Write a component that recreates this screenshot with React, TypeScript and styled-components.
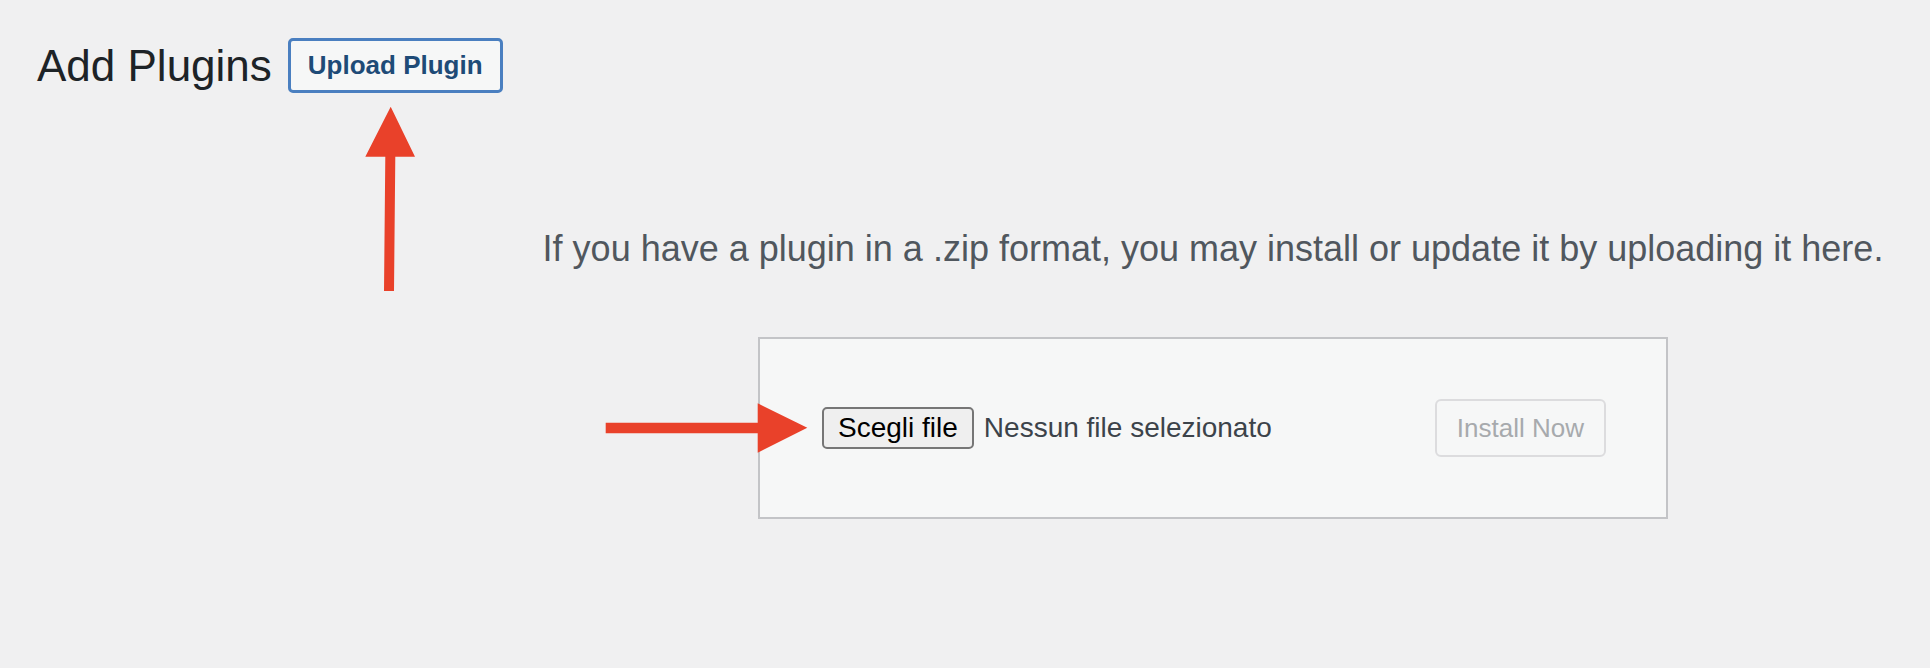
import React from "react";
import styled, { createGlobalStyle } from "styled-components";

const GlobalStyle = createGlobalStyle`
  html, body {
    margin: 0;
    padding: 0;
    background: #f0f0f1;
  }
  body {
    font-family: "Liberation Sans", Arial, sans-serif;
    color: #3c434a;
  }
  * { box-sizing: border-box; }
`;

const Page = styled.div`
  position: relative;
  width: 1930px;
  height: 668px;
  overflow: hidden;
  background: #f0f0f1;
`;

const Header = styled.div`
  display: flex;
  align-items: center;
  padding: 38px 0 0 37px;
  height: 93px;
`;

const Title = styled.h1`
  margin: 0;
  font-size: 44px;
  font-weight: 400;
  line-height: 55px;
  color: #1d2327;
`;

const TitleAction = styled.a`
  display: inline-flex;
  align-items: center;
  height: 55px;
  margin-left: 16px;
  padding: 0 17px;
  border: 3px solid #4a7fc0;
  border-radius: 5px;
  background: #f6f7f7;
  color: #1e4b77;
  font-size: 26px;
  font-weight: 700;
  text-decoration: none;
  cursor: pointer;
`;

const UploadSection = styled.section`
  display: flex;
  flex-direction: column;
  align-items: center;
  margin-left: 496px;
  padding-top: 136px;
`;

const Help = styled.p`
  margin: 0;
  font-size: 36px;
  line-height: 40px;
  color: #50575e;
  white-space: nowrap;
`;

const UploadForm = styled.form`
  display: flex;
  align-items: center;
  justify-content: space-between;
  width: 910px;
  height: 182px;
  margin-top: 68px;
  padding: 60px 60px 60px 62px;
  background: #f6f7f7;
  border: 2px solid #c3c4c7;
`;

const FileField = styled.div`
  display: flex;
  align-items: center;
  gap: 10px;
`;

const FileButton = styled.span`
  display: inline-flex;
  align-items: center;
  height: 42px;
  padding: 0 14px;
  border: 2px solid #767676;
  border-radius: 5px;
  background: #efefef;
  color: #000;
  font-size: 28px;
`;

const FileStatus = styled.span`
  font-size: 28px;
  color: #3c434a;
`;

const InstallButton = styled.button`
  height: 58px;
  padding: 0 20px;
  border: 2px solid #dcdcde;
  border-radius: 6px;
  background: #f6f7f7;
  color: #a7aaad;
  font-family: "Liberation Sans", Arial, sans-serif;
  font-size: 26px;
  cursor: default;
`;

const ArrowLayer = styled.svg<{ $left: number; $top: number }>`
  position: absolute;
  left: ${(p) => p.$left}px;
  top: ${(p) => p.$top}px;
  overflow: visible;
`;

const RED = "#e9412a";

export default function App() {
  return (
    <>
      <GlobalStyle />
      <Page>
        <Header>
          <Title>Add Plugins</Title>
          <TitleAction>Upload Plugin</TitleAction>
        </Header>
        <UploadSection>
          <Help>
            If you have a plugin in a .zip format, you may install or update it by uploading it here.
          </Help>
          <UploadForm onSubmit={(e) => e.preventDefault()}>
            <FileField>
              <FileButton>Scegli file</FileButton>
              <FileStatus>Nessun file selezionato</FileStatus>
            </FileField>
            <InstallButton type="button" disabled>
              Install Now
            </InstallButton>
          </UploadForm>
        </UploadSection>

        <ArrowLayer $left={360} $top={100} width={60} height={195} viewBox="0 0 60 195">
          <polygon
            fill={RED}
            points="24,191 34,191 35.3,56.7 55,56.7 30.7,6.7 5.3,56.7 25.3,56.7"
          />
        </ArrowLayer>
        <ArrowLayer $left={600} $top={398} width={215} height={60} viewBox="0 0 215 60">
          <polygon
            fill={RED}
            points="5.7,24.7 157.7,24.7 157.7,5.3 207.3,29.7 157.7,54.7 157.7,35.3 5.7,35.3"
          />
        </ArrowLayer>
      </Page>
    </>
  );
}
